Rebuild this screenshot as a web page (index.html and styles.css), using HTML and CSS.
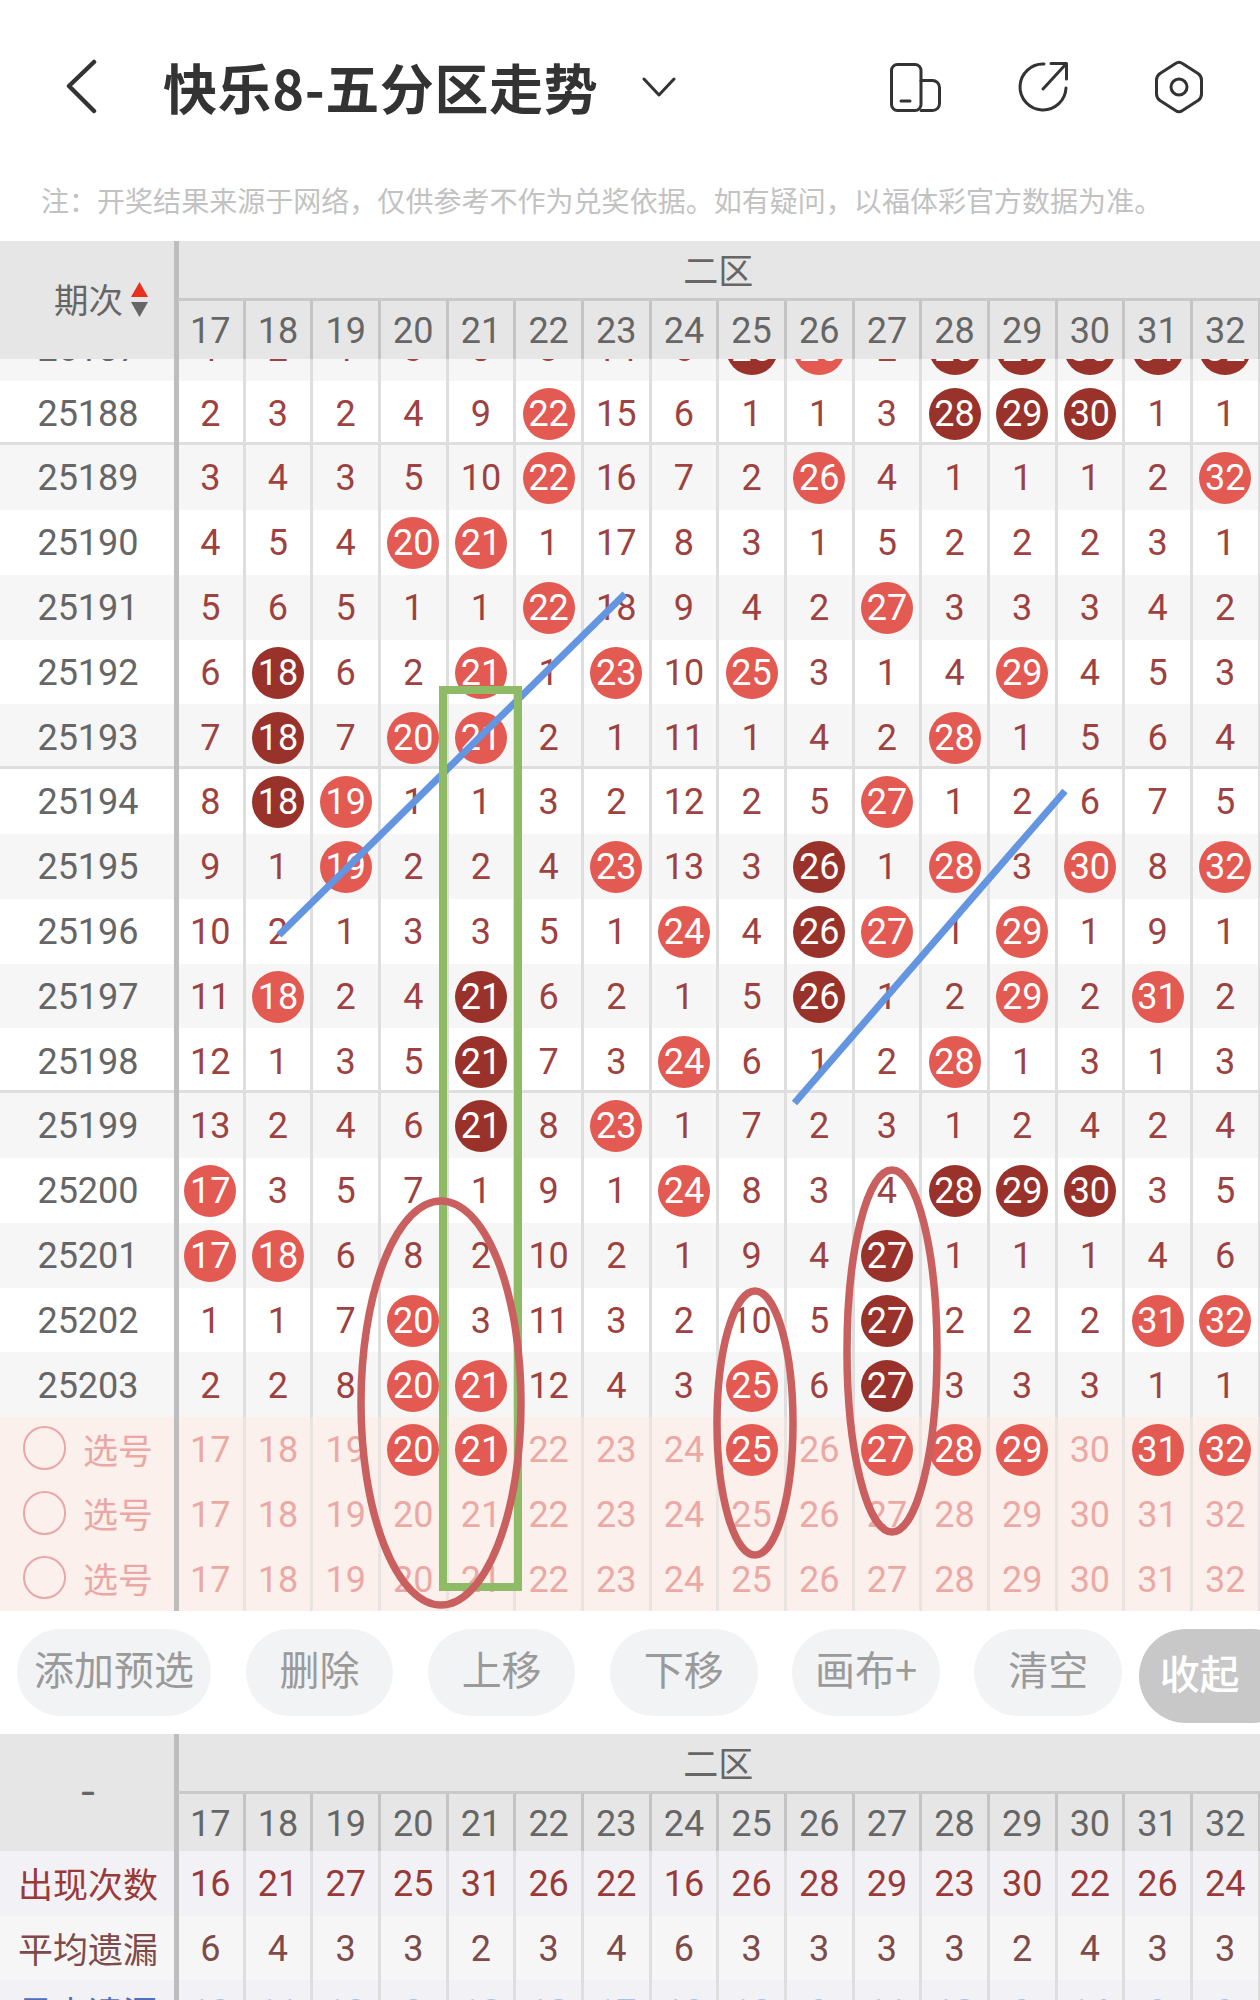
FILE: index.html
```html
<!DOCTYPE html>
<html lang="zh-CN">
<head>
<meta charset="utf-8">
<title>快乐8-五分区走势</title>
<link rel="stylesheet" href="styles.css">
</head>
<body>
<div class="app">
  <header class="topbar">
    <svg class="ico-back" viewBox="0 0 34 56"><path d="M29 3 L4 27 L29 52"/></svg>
    <h1 class="title">快乐8-五分区走势</h1>
    <svg class="ico-chev" viewBox="0 0 36 20"><path d="M3 2 L18 18 L33 2"/></svg>
    <div class="top-actions">
      <svg class="ico" viewBox="0 0 56 56"><rect x="3.5" y="5.5" width="29.5" height="46" rx="6"/><path d="M33 21.5h11.5a7 7 0 0 1 7 7v16a7 7 0 0 1-7 7H33"/><path d="M13 42h9"/></svg>
      <svg class="ico" viewBox="0 0 56 56"><path d="M29 5A23 23 0 1 0 51 29"/><path d="M28 30L51 5"/><path d="M36 4.5H51.5V20"/></svg>
      <svg class="ico ico-last" viewBox="0 0 56 56"><path d="M24.5 4.5Q28 2 31.5 4.5L47 14.5Q50.5 17 50.5 21V35Q50.5 39 47 41.5L31.5 51.5Q28 54 24.5 51.5L9 41.5Q5.5 39 5.5 35V21Q5.5 17 9 14.5Z"/><circle cx="28" cy="28" r="8"/></svg>
    </div>
  </header>
  <p class="note">注：开奖结果来源于网络，仅供参考不作为兑奖依据。如有疑问，以福体彩官方数据为准。</p>

  <section class="thead">
    <div class="corner corner-sort"><span>期次</span><svg class="sort" viewBox="0 0 17 35"><path class="up" d="M8.5 0L17 15H0Z"/><path class="down" d="M0 20H17L8.5 35Z"/></svg></div>
    <div class="zone">二区</div>
    <div class="hc">17</div><div class="hc">18</div><div class="hc">19</div><div class="hc">20</div><div class="hc">21</div><div class="hc">22</div><div class="hc">23</div><div class="hc">24</div><div class="hc">25</div><div class="hc">26</div><div class="hc">27</div><div class="hc">28</div><div class="hc">29</div><div class="hc">30</div><div class="hc">31</div><div class="hc">32</div>
  </section>

  <section class="tbody">
    <div class="rows">
      <div class="row alt"><div class="lab">25187</div><div class="c">1</div><div class="c">2</div><div class="c">1</div><div class="c">3</div><div class="c">8</div><div class="c">3</div><div class="c">14</div><div class="c">5</div><div class="c"><b class="ball dark">25</b></div><div class="c"><b class="ball">26</b></div><div class="c">2</div><div class="c"><b class="ball dark">28</b></div><div class="c"><b class="ball dark">29</b></div><div class="c"><b class="ball dark">30</b></div><div class="c"><b class="ball dark">31</b></div><div class="c"><b class="ball dark">32</b></div></div>
      <div class="row mark"><div class="lab">25188</div><div class="c">2</div><div class="c">3</div><div class="c">2</div><div class="c">4</div><div class="c">9</div><div class="c"><b class="ball">22</b></div><div class="c">15</div><div class="c">6</div><div class="c">1</div><div class="c">1</div><div class="c">3</div><div class="c"><b class="ball dark">28</b></div><div class="c"><b class="ball dark">29</b></div><div class="c"><b class="ball dark">30</b></div><div class="c">1</div><div class="c">1</div></div>
      <div class="row alt"><div class="lab">25189</div><div class="c">3</div><div class="c">4</div><div class="c">3</div><div class="c">5</div><div class="c">10</div><div class="c"><b class="ball">22</b></div><div class="c">16</div><div class="c">7</div><div class="c">2</div><div class="c"><b class="ball">26</b></div><div class="c">4</div><div class="c">1</div><div class="c">1</div><div class="c">1</div><div class="c">2</div><div class="c"><b class="ball">32</b></div></div>
      <div class="row"><div class="lab">25190</div><div class="c">4</div><div class="c">5</div><div class="c">4</div><div class="c"><b class="ball">20</b></div><div class="c"><b class="ball">21</b></div><div class="c">1</div><div class="c">17</div><div class="c">8</div><div class="c">3</div><div class="c">1</div><div class="c">5</div><div class="c">2</div><div class="c">2</div><div class="c">2</div><div class="c">3</div><div class="c">1</div></div>
      <div class="row alt"><div class="lab">25191</div><div class="c">5</div><div class="c">6</div><div class="c">5</div><div class="c">1</div><div class="c">1</div><div class="c"><b class="ball">22</b></div><div class="c">18</div><div class="c">9</div><div class="c">4</div><div class="c">2</div><div class="c"><b class="ball">27</b></div><div class="c">3</div><div class="c">3</div><div class="c">3</div><div class="c">4</div><div class="c">2</div></div>
      <div class="row"><div class="lab">25192</div><div class="c">6</div><div class="c"><b class="ball dark">18</b></div><div class="c">6</div><div class="c">2</div><div class="c"><b class="ball">21</b></div><div class="c">1</div><div class="c"><b class="ball">23</b></div><div class="c">10</div><div class="c"><b class="ball">25</b></div><div class="c">3</div><div class="c">1</div><div class="c">4</div><div class="c"><b class="ball">29</b></div><div class="c">4</div><div class="c">5</div><div class="c">3</div></div>
      <div class="row alt mark"><div class="lab">25193</div><div class="c">7</div><div class="c"><b class="ball dark">18</b></div><div class="c">7</div><div class="c"><b class="ball">20</b></div><div class="c"><b class="ball">21</b></div><div class="c">2</div><div class="c">1</div><div class="c">11</div><div class="c">1</div><div class="c">4</div><div class="c">2</div><div class="c"><b class="ball">28</b></div><div class="c">1</div><div class="c">5</div><div class="c">6</div><div class="c">4</div></div>
      <div class="row"><div class="lab">25194</div><div class="c">8</div><div class="c"><b class="ball dark">18</b></div><div class="c"><b class="ball">19</b></div><div class="c">1</div><div class="c">1</div><div class="c">3</div><div class="c">2</div><div class="c">12</div><div class="c">2</div><div class="c">5</div><div class="c"><b class="ball">27</b></div><div class="c">1</div><div class="c">2</div><div class="c">6</div><div class="c">7</div><div class="c">5</div></div>
      <div class="row alt"><div class="lab">25195</div><div class="c">9</div><div class="c">1</div><div class="c"><b class="ball">19</b></div><div class="c">2</div><div class="c">2</div><div class="c">4</div><div class="c"><b class="ball">23</b></div><div class="c">13</div><div class="c">3</div><div class="c"><b class="ball dark">26</b></div><div class="c">1</div><div class="c"><b class="ball">28</b></div><div class="c">3</div><div class="c"><b class="ball">30</b></div><div class="c">8</div><div class="c"><b class="ball">32</b></div></div>
      <div class="row"><div class="lab">25196</div><div class="c">10</div><div class="c">2</div><div class="c">1</div><div class="c">3</div><div class="c">3</div><div class="c">5</div><div class="c">1</div><div class="c"><b class="ball">24</b></div><div class="c">4</div><div class="c"><b class="ball dark">26</b></div><div class="c"><b class="ball">27</b></div><div class="c">1</div><div class="c"><b class="ball">29</b></div><div class="c">1</div><div class="c">9</div><div class="c">1</div></div>
      <div class="row alt"><div class="lab">25197</div><div class="c">11</div><div class="c"><b class="ball">18</b></div><div class="c">2</div><div class="c">4</div><div class="c"><b class="ball dark">21</b></div><div class="c">6</div><div class="c">2</div><div class="c">1</div><div class="c">5</div><div class="c"><b class="ball dark">26</b></div><div class="c">1</div><div class="c">2</div><div class="c"><b class="ball">29</b></div><div class="c">2</div><div class="c"><b class="ball">31</b></div><div class="c">2</div></div>
      <div class="row mark"><div class="lab">25198</div><div class="c">12</div><div class="c">1</div><div class="c">3</div><div class="c">5</div><div class="c"><b class="ball dark">21</b></div><div class="c">7</div><div class="c">3</div><div class="c"><b class="ball">24</b></div><div class="c">6</div><div class="c">1</div><div class="c">2</div><div class="c"><b class="ball">28</b></div><div class="c">1</div><div class="c">3</div><div class="c">1</div><div class="c">3</div></div>
      <div class="row alt"><div class="lab">25199</div><div class="c">13</div><div class="c">2</div><div class="c">4</div><div class="c">6</div><div class="c"><b class="ball dark">21</b></div><div class="c">8</div><div class="c"><b class="ball">23</b></div><div class="c">1</div><div class="c">7</div><div class="c">2</div><div class="c">3</div><div class="c">1</div><div class="c">2</div><div class="c">4</div><div class="c">2</div><div class="c">4</div></div>
      <div class="row"><div class="lab">25200</div><div class="c"><b class="ball">17</b></div><div class="c">3</div><div class="c">5</div><div class="c">7</div><div class="c">1</div><div class="c">9</div><div class="c">1</div><div class="c"><b class="ball">24</b></div><div class="c">8</div><div class="c">3</div><div class="c">4</div><div class="c"><b class="ball dark">28</b></div><div class="c"><b class="ball dark">29</b></div><div class="c"><b class="ball dark">30</b></div><div class="c">3</div><div class="c">5</div></div>
      <div class="row alt"><div class="lab">25201</div><div class="c"><b class="ball">17</b></div><div class="c"><b class="ball">18</b></div><div class="c">6</div><div class="c">8</div><div class="c">2</div><div class="c">10</div><div class="c">2</div><div class="c">1</div><div class="c">9</div><div class="c">4</div><div class="c"><b class="ball dark">27</b></div><div class="c">1</div><div class="c">1</div><div class="c">1</div><div class="c">4</div><div class="c">6</div></div>
      <div class="row"><div class="lab">25202</div><div class="c">1</div><div class="c">1</div><div class="c">7</div><div class="c"><b class="ball">20</b></div><div class="c">3</div><div class="c">11</div><div class="c">3</div><div class="c">2</div><div class="c">10</div><div class="c">5</div><div class="c"><b class="ball dark">27</b></div><div class="c">2</div><div class="c">2</div><div class="c">2</div><div class="c"><b class="ball">31</b></div><div class="c"><b class="ball">32</b></div></div>
      <div class="row alt"><div class="lab">25203</div><div class="c">2</div><div class="c">2</div><div class="c">8</div><div class="c"><b class="ball">20</b></div><div class="c"><b class="ball">21</b></div><div class="c">12</div><div class="c">4</div><div class="c">3</div><div class="c"><b class="ball">25</b></div><div class="c">6</div><div class="c"><b class="ball dark">27</b></div><div class="c">3</div><div class="c">3</div><div class="c">3</div><div class="c">1</div><div class="c">1</div></div>
      <div class="row pick"><div class="lab"><i class="radio"></i><span>选号</span></div><div class="c">17</div><div class="c">18</div><div class="c">19</div><div class="c"><b class="ball">20</b></div><div class="c"><b class="ball">21</b></div><div class="c">22</div><div class="c">23</div><div class="c">24</div><div class="c"><b class="ball">25</b></div><div class="c">26</div><div class="c"><b class="ball">27</b></div><div class="c"><b class="ball">28</b></div><div class="c"><b class="ball">29</b></div><div class="c">30</div><div class="c"><b class="ball">31</b></div><div class="c"><b class="ball">32</b></div></div>
      <div class="row pick"><div class="lab"><i class="radio"></i><span>选号</span></div><div class="c">17</div><div class="c">18</div><div class="c">19</div><div class="c">20</div><div class="c">21</div><div class="c">22</div><div class="c">23</div><div class="c">24</div><div class="c">25</div><div class="c">26</div><div class="c">27</div><div class="c">28</div><div class="c">29</div><div class="c">30</div><div class="c">31</div><div class="c">32</div></div>
      <div class="row pick"><div class="lab"><i class="radio"></i><span>选号</span></div><div class="c">17</div><div class="c">18</div><div class="c">19</div><div class="c">20</div><div class="c">21</div><div class="c">22</div><div class="c">23</div><div class="c">24</div><div class="c">25</div><div class="c">26</div><div class="c">27</div><div class="c">28</div><div class="c">29</div><div class="c">30</div><div class="c">31</div><div class="c">32</div></div>
    </div>
  </section>

  <nav class="actions">
    <button class="btn btn-wide">添加预选</button>
    <button class="btn">删除</button>
    <button class="btn">上移</button>
    <button class="btn">下移</button>
    <button class="btn">画布+</button>
    <button class="btn">清空</button>
    <button class="btn-fold">收起</button>
  </nav>

  <section class="thead">
    <div class="corner corner-dash">-</div>
    <div class="zone">二区</div>
    <div class="hc">17</div><div class="hc">18</div><div class="hc">19</div><div class="hc">20</div><div class="hc">21</div><div class="hc">22</div><div class="hc">23</div><div class="hc">24</div><div class="hc">25</div><div class="hc">26</div><div class="hc">27</div><div class="hc">28</div><div class="hc">29</div><div class="hc">30</div><div class="hc">31</div><div class="hc">32</div>
  </section>
  <section class="stats">
    <div class="row stat-count"><div class="lab">出现次数</div><div class="c">16</div><div class="c">21</div><div class="c">27</div><div class="c">25</div><div class="c">31</div><div class="c">26</div><div class="c">22</div><div class="c">16</div><div class="c">26</div><div class="c">28</div><div class="c">29</div><div class="c">23</div><div class="c">30</div><div class="c">22</div><div class="c">26</div><div class="c">24</div></div>
    <div class="row stat-avg"><div class="lab">平均遗漏</div><div class="c">6</div><div class="c">4</div><div class="c">3</div><div class="c">3</div><div class="c">2</div><div class="c">3</div><div class="c">4</div><div class="c">6</div><div class="c">3</div><div class="c">3</div><div class="c">3</div><div class="c">3</div><div class="c">2</div><div class="c">4</div><div class="c">3</div><div class="c">3</div></div>
    <div class="row stat-max"><div class="lab">最大遗漏</div><div class="c">13</div><div class="c">11</div><div class="c">13</div><div class="c">8</div><div class="c">10</div><div class="c">12</div><div class="c">17</div><div class="c">13</div><div class="c">10</div><div class="c">9</div><div class="c">11</div><div class="c">12</div><div class="c">9</div><div class="c">14</div><div class="c">9</div><div class="c">9</div></div>
  </section>

  <svg class="overlay" viewBox="0 0 1260 2000">
    <line class="pen-blue" x1="625" y1="594" x2="279" y2="935"/>
    <line class="pen-blue" x1="1065" y1="791" x2="794.5" y2="1103"/>
    <rect class="pen-green" x="443" y="690" width="75" height="897"/>
    <ellipse class="pen-red" cx="441" cy="1403" rx="80" ry="202"/>
    <ellipse class="pen-red" cx="755" cy="1423" rx="38" ry="132"/>
    <ellipse class="pen-red" cx="892" cy="1351" rx="45" ry="181"/>
  </svg>
</div>
</body>
</html>
```

FILE: styles.css
```css
* { box-sizing: border-box; }
html, body { margin: 0; padding: 0; background: #fff; }
body { font-family: Roboto, "Noto Sans CJK SC", sans-serif; }

.app { position: relative; width: 1260px; height: 2000px; overflow: hidden; }

/* top bar */
.topbar { display: flex; align-items: center; height: 174px; padding: 0 53px 0 65px; color: #333; }
.topbar svg { fill: none; stroke: #333; stroke-linecap: round; stroke-linejoin: round; flex: none; }
.ico-back { width: 34px; height: 56px; stroke-width: 4.5; }
.title { margin: 0 0 0 64px; font: 700 54px/1 "Noto Sans CJK SC", sans-serif; letter-spacing: 0.6px; color: #333; white-space: nowrap; }
.ico-chev { width: 36px; height: 20px; margin-left: 43px; stroke-width: 3; }
.top-actions { display: flex; gap: 71px; margin-left: auto; }
.ico { width: 56px; height: 56px; stroke-width: 3; }
.ico-last { margin-left: 9px; }

.note { margin: 0; height: 67px; padding: 7px 0 0 41px; font: 400 28px/38px "Noto Sans CJK SC", sans-serif; letter-spacing: 0.03px; color: #c2c2c2; white-space: nowrap; }

/* table head */
.thead { display: grid; grid-template-columns: 178px repeat(16, 67.67px); grid-template-rows: 60px 57.5px; background: #e6e6e6; color: #666; font-size: 36px; }
.corner { grid-row: 1 / span 2; margin-right: -1px; display: flex; align-items: center; justify-content: center; border-right: 5px solid #bdbdbd; font: 400 34.5px/1 "Noto Sans CJK SC", sans-serif; }
.corner-sort { justify-content: flex-start; padding: 0 0 4px 54px; gap: 8px; }
.corner-dash { padding: 0 0 12px 2px; font-size: 46px; }
.sort { width: 17px; height: 35px; margin-top: 4px; }
.sort .up { fill: #e8301f; }
.sort .down { fill: #666; }
.zone { grid-column: 2 / span 16; display: flex; align-items: center; justify-content: center; padding: 0 2px 2px 0; border-bottom: 3px solid #c9c9c9; font: 400 35px/1 "Noto Sans CJK SC", sans-serif; }
.hc { display: flex; align-items: center; justify-content: center; padding-top: 2.6px; border-right: 3px solid #c4c4c4; }

/* table body */
.tbody { height: 1252px; overflow: hidden; }
.rows { margin-top: -42.8px; }
.row { display: grid; grid-template-columns: 178px repeat(16, 67.67px); height: 64.8px; background: #fff; color: #9d4240; font-size: 36px; }
.row.alt { background: #f6f6f6; }
.row.mark { box-shadow: inset 0 -3px 0 #dedede; }
.lab { margin-right: -1px; display: flex; align-items: center; justify-content: center; padding: 1.6px 0 0 2px; border-right: 5px solid #bdbdbd; color: #666; }
.c { display: flex; align-items: center; justify-content: center; padding-top: 1.6px; border-right: 3px solid #dedede; white-space: nowrap; }

.ball { display: flex; align-items: center; justify-content: center; width: 52px; height: 52px; flex: none; border-radius: 50%; background: #e25a52; color: #fff; font-weight: 400; }
.ball.dark { background: #98322b; }

.row.pick { background: #fcf0ec; color: #eba9a6; }
.pick .lab { justify-content: flex-start; gap: 17px; padding: 0 0 3px 22.5px; color: #e9a8a6; font: 400 35px/1 "Noto Sans CJK SC", sans-serif; }
.pick .c { border-right-color: #e9e4e2; }
.radio { display: block; width: 43.5px; height: 43.5px; flex: none; border: 2.5px solid #e9a8a6; border-radius: 50%; }

/* action buttons */
.actions { display: flex; align-items: flex-start; gap: 34.7px; height: 123px; padding: 18px 0 0 17px; }
.btn, .btn-fold { border: 0; font: 400 40px/1 "Noto Sans CJK SC", sans-serif; flex: none; }
.btn { width: 147.5px; height: 87px; padding: 0 0 8px; border-radius: 43.5px; background: #f2f3f5; color: #9a9a9a; }
.btn-wide { width: 194px; }
.btn-fold { width: 160px; height: 94px; margin-left: -18px; padding: 0 0 7px 21px; text-align: left; border-radius: 47px; background: #c8c8c8; color: #fff; font-weight: 500; }

/* stats */
.stats .row { height: 64.6px; }
.stats .lab { padding: 0 0 1px 2px; font: 400 35px/1 "Noto Sans CJK SC", sans-serif; }
.stat-count.row { background: #f1f1f6; color: #9a3a38; }
.stat-count .lab { color: #9a3a38; }
.stat-avg.row { background: #f6f6f6; color: #7f4a4a; }
.stat-avg .lab { color: #7f4a4a; }
.stat-max.row { background: #f1f1f6; color: #a9c4ee; }
.stat-max .lab { color: #4f70c0; }

/* pen annotations drawn over the chart */
.overlay { position: absolute; left: 0; top: 0; width: 1260px; height: 2000px; pointer-events: none; fill: none; }
.pen-blue { stroke: #6495e0; stroke-width: 7; }
.pen-green { stroke: #8fbb66; stroke-width: 8; }
.pen-red { stroke: #c9605f; stroke-width: 7.5; }
```
